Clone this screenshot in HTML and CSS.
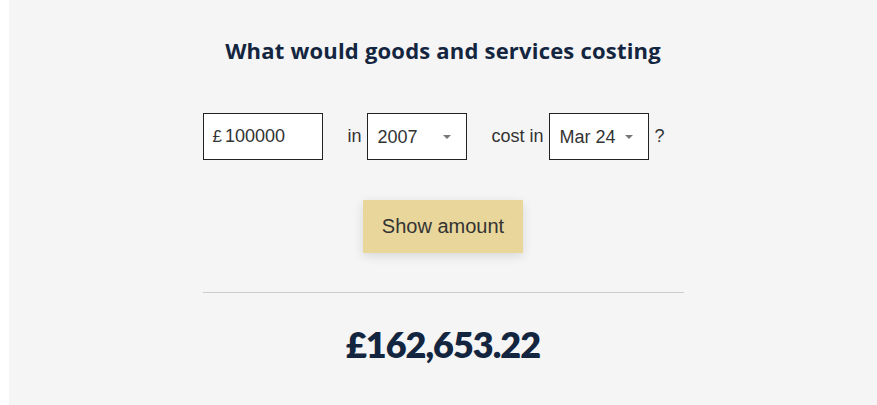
FILE: index.html
```html
<!DOCTYPE html>
<html lang="en">
<head>
    <meta charset="UTF-8">
    <meta name="viewport" content="width=device-width, initial-scale=1.0">
    <title>Inflation calculator</title>
    <link rel="stylesheet" href="styles.css">
</head>
<body>
    <div class="panel">
        <div class="calc">
            <h2 class="calc-title">What would goods and services costing</h2>

            <!-- form row -->
            <div class="calc-row">
                <div class="amount-box">
                    <span class="currency">£</span>
                    <input type="text" class="amount-input" value="100000">
                </div>
                <span class="calc-label">in</span>
                <div class="select-box">
                    <select>
                        <option>2007</option>
                    </select>
                </div>
                <span class="calc-label">cost in</span>
                <div class="select-box">
                    <select>
                        <option>Mar 24</option>
                    </select>
                </div>
                <span class="calc-q">?</span>
            </div>

            <div class="btn-wrap">
                <button class="btn-show">Show amount</button>
            </div>

            <hr class="divider">

            <div class="result">£162,653.22</div>
        </div>
    </div>
</body>
</html>
```
FILE: styles.css
```css
* { margin: 0; padding: 0; box-sizing: border-box; }
body {
    background: #fff;
    font-family: "Liberation Sans", Arial, sans-serif;
    color: #333;
}
.panel {
    margin-left: 9px; background: #f5f5f5; min-height: 100vh;
    padding-top: 34px;
}
.calc { width: 481px; margin: 0 auto; }
.calc-title {
    font-family: "Open Sans", "Noto Sans", sans-serif; font-weight: 700;
    font-size: 22px; letter-spacing: 0.2px; line-height: 32px;
    color: #14263f; text-align: center;
}
.calc-row {
    display: flex; align-items: center; margin-top: 47px; font-size: 18px;
}
.amount-box {
    width: 120px; height: 47px; border: 1px solid #222; background: #fff;
    display: flex; align-items: center; padding-left: 9px;
}
.currency { font-size: 17px; margin-right: 3px; }
.amount-input {
    border: none; outline: none; background: transparent; width: 80px;
    font: inherit; color: #333;
}
.calc-label { margin: 0 5px 0 25px; }
.select-box {
    position: relative; width: 100px; height: 47px;
    border: 1px solid #222; background: #fff;
}
.select-box::after {
    content: ""; position: absolute; right: 15px; top: 21px;
    border-left: 4px solid transparent; border-right: 4px solid transparent;
    border-top: 4px solid #777;
}
.select-box select {
    appearance: none; -webkit-appearance: none; border: none; outline: none;
    background: transparent; width: 100%; height: 100%; padding-left: 10px;
    font: inherit; color: #333;
}
.calc-q { margin-left: 6px; }
.btn-wrap { text-align: center; margin-top: 40px; }
.btn-show {
    width: 160px; height: 53px; border: none; background: #e9d69b;
    font-family: "Liberation Sans", Arial, sans-serif; font-size: 20px; color: #333;
    box-shadow: 0 3px 10px rgba(0,0,0,0.12); cursor: pointer;
}
.divider { border: none; border-top: 1px solid #ccc; margin-top: 39px; }
.result {
    font-family: Lato, "Noto Sans", sans-serif; font-weight: 800;
    font-size: 36px; letter-spacing: -1px; color: #14263f; text-align: center;
    margin-top: 29px;
}
```
